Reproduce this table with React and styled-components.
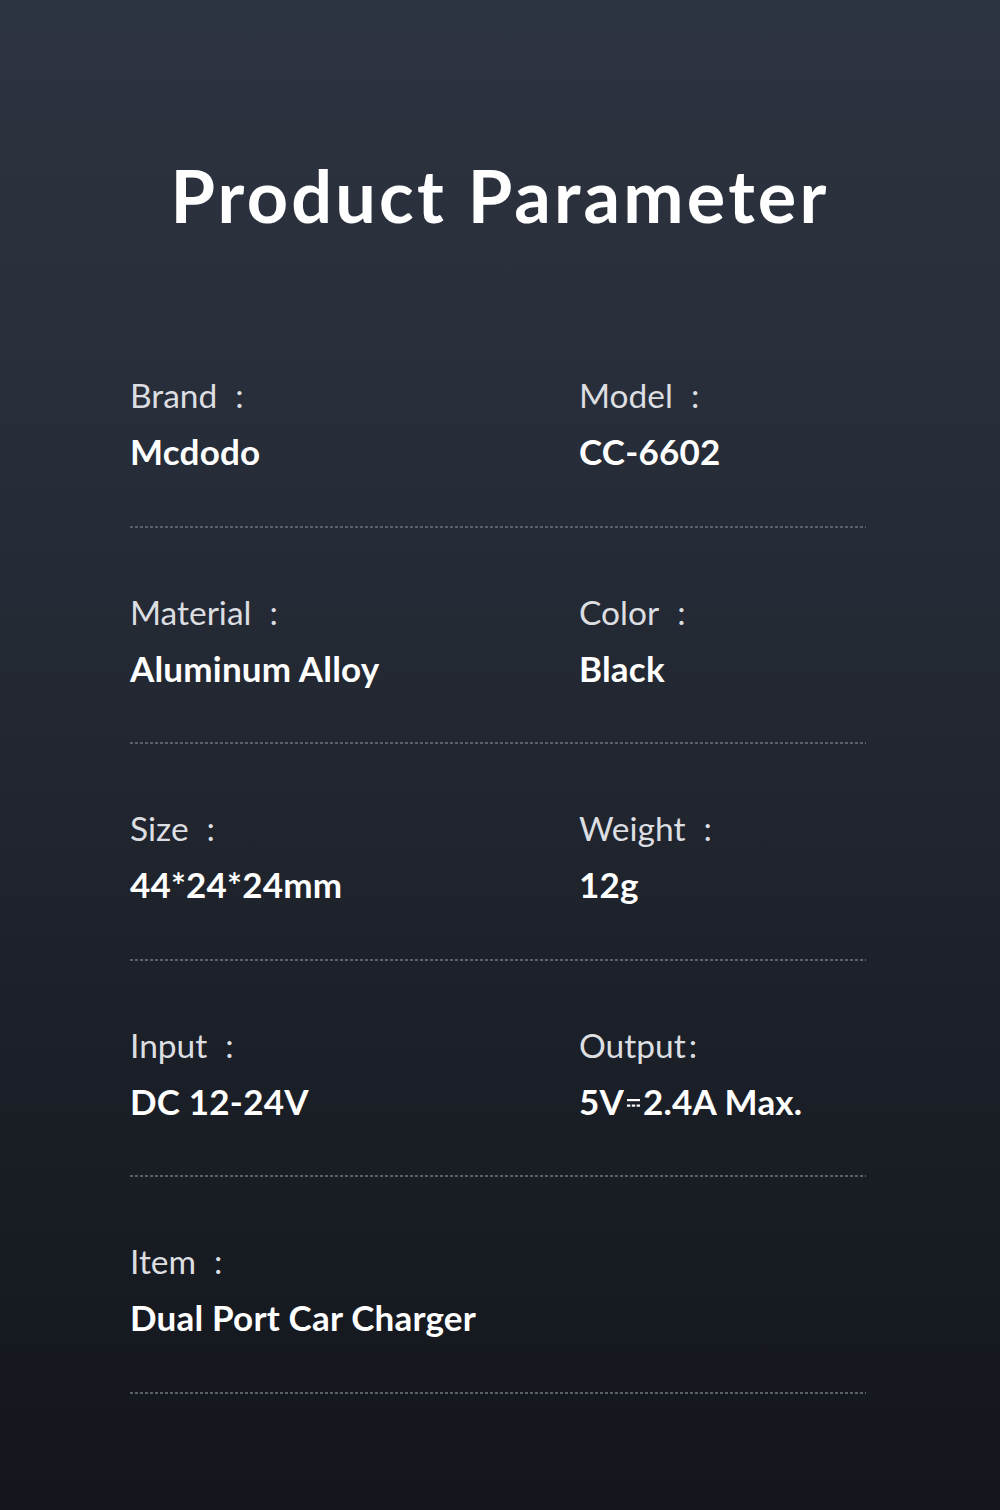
import React from "react";
import styled, { createGlobalStyle } from "styled-components";

const Global = createGlobalStyle`
  html, body { margin: 0; padding: 0; }
  body { background: #13161c; }
`;

const Page = styled.div`
  width: 1000px;
  height: 1510px;
  box-sizing: border-box;
  background: linear-gradient(180deg, #2d3441 0%, #262c37 35%, #1b1f27 70%, #13161c 100%);
  font-family: "Lato", "Noto Sans", sans-serif;
  color: #fff;
  padding-top: 150px;
`;

const Title = styled.h1`
  margin: 0;
  text-align: center;
  font-size: 72px;
  line-height: 90px;
  font-weight: 700;
  letter-spacing: 3.2px;
  color: #ffffff;
`;

const Table = styled.div`
  margin: 71px 134px 0 130px;
`;

const Row = styled.div`
  height: 216.5px;
  box-sizing: border-box;
  display: grid;
  grid-template-columns: 449px 1fr;
  padding-top: 64px;
  background-image: linear-gradient(to right, #5a606b 55%, transparent 55%);
  background-size: 5px 2px;
  background-repeat: repeat-x;
  background-position: left bottom;
`;

const Cell = styled.div`
  display: flex;
  flex-direction: column;
`;

const Label = styled.div`
  font-size: 33.5px;
  line-height: 40px;
  font-weight: 400;
  color: #dcdee1;
`;

const Colon = styled.span`
  margin-left: ${(p) => (p.$tight ? "3px" : "18px")};
`;

const Value = styled.div`
  margin-top: 16px;
  font-size: 35px;
  line-height: 40px;
  font-weight: 700;
  letter-spacing: 0.2px;
  color: #ffffff;
  display: flex;
  align-items: center;
`;

const DC = styled.svg`
  width: 15px;
  height: 14px;
  margin: 4px 2px 0 2px;
`;

const DcSymbol = () => (
  <DC viewBox="0 0 15 14">
    <rect x="1" y="3" width="13" height="2.2" fill="#fff" />
    <rect x="1" y="8.5" width="3.4" height="2.2" fill="#fff" />
    <rect x="5.8" y="8.5" width="3.4" height="2.2" fill="#fff" />
    <rect x="10.6" y="8.5" width="3.4" height="2.2" fill="#fff" />
  </DC>
);

const rows = [
  [
    { label: "Brand", value: "Mcdodo" },
    { label: "Model", value: "CC-6602" },
  ],
  [
    { label: "Material", value: "Aluminum Alloy" },
    { label: "Color", value: "Black" },
  ],
  [
    { label: "Size", value: "44*24*24mm" },
    { label: "Weight", value: "12g" },
  ],
  [
    { label: "Input", value: "DC 12-24V" },
    { label: "Output", tight: true, value: (<>5V<DcSymbol />2.4A Max.</>) },
  ],
  [{ label: "Item", value: "Dual Port Car Charger" }],
];

export default function App() {
  return (
    <Page>
      <Global />
      <Title>Product Parameter</Title>
      <Table>
        {rows.map((r, i) => (
          <Row key={i}>
            {r.map((c, j) => (
              <Cell key={j}>
                <Label>
                  {c.label}
                  <Colon $tight={c.tight}>:</Colon>
                </Label>
                <Value>{c.value}</Value>
              </Cell>
            ))}
          </Row>
        ))}
      </Table>
    </Page>
  );
}
